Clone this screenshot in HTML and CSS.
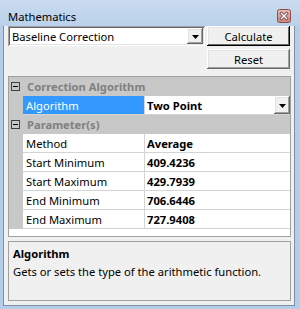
FILE: index.html
```html
<!DOCTYPE html>
<html lang="en">
<head>
  <meta charset="UTF-8">
  <link rel="stylesheet" href="styles.css">
</head>
<body>
  <div class="window">
    <div class="titlebar">
      <span class="title">Mathematics</span>
      <svg class="close" width="14" height="14" viewBox="0 0 14 14">
        <defs>
          <linearGradient id="cg" x1="0" y1="0" x2="0" y2="1">
            <stop offset="0" stop-color="#e9bdb9"/>
            <stop offset="1" stop-color="#c98581"/>
          </linearGradient>
        </defs>
        <rect x="0.5" y="0.5" width="13" height="13" rx="2" fill="url(#cg)" stroke="#8e4a47"/>
        <path d="M4.5 4.5 L9.5 9.5 M9.5 4.5 L4.5 9.5" stroke="#6b3533" stroke-width="3" stroke-linecap="square"/>
        <path d="M4.5 4.5 L9.5 9.5 M9.5 4.5 L4.5 9.5" stroke="#fff" stroke-width="1.5" stroke-linecap="square"/>
      </svg>
    </div>

    <div class="client">
      <div class="toolbar">
        <div class="combo sunken">
          <span class="combo-text">Baseline Correction</span>
          <span class="drop raised">
            <svg width="7" height="4" viewBox="0 0 7 4"><polygon points="0,0 7,0 3.5,4" fill="#000"/></svg>
          </span>
        </div>
        <div class="buttons">
          <button class="btn raised default">Calculate</button>
          <button class="btn raised">Reset</button>
        </div>
      </div>

      <div class="grid">
        <div class="category">
          <span class="gutter"><span class="toggle"></span></span>
          <span class="cat-label">Correction Algorithm</span>
        </div>
        <div class="row selected">
          <span class="gutter"></span>
          <span class="name">Algorithm</span>
          <span class="value">
            <span class="value-text">Two Point</span>
            <span class="drop raised">
              <svg width="7" height="4" viewBox="0 0 7 4"><polygon points="0,0 7,0 3.5,4" fill="#000"/></svg>
            </span>
          </span>
        </div>
        <div class="category">
          <span class="gutter"><span class="toggle"></span></span>
          <span class="cat-label">Parameter(s)</span>
        </div>
        <div class="row">
          <span class="gutter"></span>
          <span class="name">Method</span>
          <span class="value"><span class="value-text">Average</span></span>
        </div>
        <div class="row">
          <span class="gutter"></span>
          <span class="name">Start Minimum</span>
          <span class="value"><span class="value-text">409.4236</span></span>
        </div>
        <div class="row">
          <span class="gutter"></span>
          <span class="name">Start Maximum</span>
          <span class="value"><span class="value-text">429.7939</span></span>
        </div>
        <div class="row">
          <span class="gutter"></span>
          <span class="name">End Minimum</span>
          <span class="value"><span class="value-text">706.6446</span></span>
        </div>
        <div class="row">
          <span class="gutter"></span>
          <span class="name">End Maximum</span>
          <span class="value"><span class="value-text">727.9408</span></span>
        </div>
      </div>

      <div class="help">
        <div class="help-title">Algorithm</div>
        <div class="help-text">Gets or sets the type of the arithmetic function.</div>
      </div>
    </div>
  </div>
</body>
</html>
```

FILE: styles.css
```css
* {
  box-sizing: border-box;
}
body {
  margin: 0;
  font-family: "Noto Sans", sans-serif;
  font-size: 11.2px;
  color: #000;
}
.window {
  width: 300px;
  height: 309px;
  background: #b4cde8;
  display: flex;
  flex-direction: column;
}
.titlebar {
  height: 26px;
  display: flex;
  align-items: center;
  padding: 6px 9px 0 8px;
  background: linear-gradient(#c9dbef, #b9d1ea);
}
.title {
  flex: 1;
}
.client {
  flex: 1;
  margin: 0 5px 3px 3px;
  border: 1px solid #7d8fa5;
  border-top: none;
  background: #f0f0f0;
  padding: 0 3px 0 4px;
  display: flex;
  flex-direction: column;
}
.raised {
  background: #f0f0f0;
  box-shadow: inset -1px -1px #696969, inset 1px 1px #fff, inset -2px -2px #a0a0a0, inset 2px 2px #e3e3e3;
}
.sunken {
  background: #fff;
  box-shadow: inset 1px 1px #a0a0a0, inset -1px -1px #fff, inset 2px 2px #696969, inset -2px -2px #e3e3e3;
}
.toolbar {
  display: flex;
  gap: 2px;
}
.combo {
  width: 197px;
  height: 20px;
  display: flex;
  align-items: center;
  padding: 2px 2px 2px 4px;
}
.combo-text {
  flex: 1;
}
.drop {
  width: 16px;
  height: 16px;
  display: flex;
  align-items: center;
  justify-content: center;
  padding-top: 1px;
}
.buttons {
  width: 83px;
  display: flex;
  flex-direction: column;
  gap: 3px;
}
.btn {
  height: 20px;
  border: none;
  padding: 0;
  font: inherit;
  color: #000;
}
.btn.default {
  box-shadow: inset -1px -1px #000, inset 1px 1px #fff, inset -2px -2px #696969, inset 2px 2px #e3e3e3;
}
.grid {
  margin-top: 7px;
  height: 161px;
  border: 1px solid #a0a0a0;
  background: #fff;
}
.row, .category {
  display: flex;
  height: 19px;
}
.gutter {
  width: 14px;
  background: #c8c8c8;
  display: flex;
  align-items: center;
  padding-left: 2px;
}
.category {
  background: #c8c8c8;
}
.toggle {
  width: 9px;
  height: 9px;
  border: 1px solid #404040;
  display: flex;
  align-items: center;
  justify-content: center;
}
.toggle::after {
  content: "";
  width: 5px;
  height: 1px;
  background: #000;
}
.cat-label {
  font-weight: bold;
  color: #808080;
  padding-left: 4px;
  display: flex;
  align-items: center;
}
.name {
  width: 122px;
  padding-left: 3px;
  border-right: 1px solid #d4d4d4;
  border-bottom: 1px solid #d4d4d4;
  display: flex;
  align-items: center;
}
.value {
  flex: 1;
  display: flex;
  align-items: center;
  padding-left: 2px;
  border-bottom: 1px solid #d4d4d4;
  font-weight: bold;
}
.value-text {
  flex: 1;
}
.value .drop {
  height: 18px;
  width: 16px;
}
.selected .name {
  background: #3399ff;
  color: #fff;
}
.help {
  margin-top: 4px;
  height: 60px;
  border: 1px solid #a0a0a0;
  padding: 4px 4px 0;
}
.help-title {
  font-weight: bold;
}
.help-text {
  margin-top: 3px;
}
```
